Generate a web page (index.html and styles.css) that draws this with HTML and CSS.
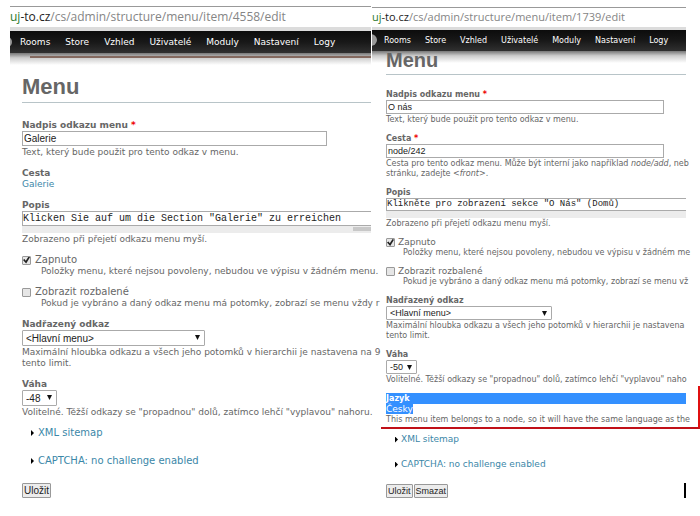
FILE: index.html
```
<!DOCTYPE html>
<html lang="cs">
<head>
<meta charset="utf-8">
<title>Menu</title>
<link rel="stylesheet" href="styles.css">
</head>
<body>
<main class="compare">
  <section class="panel panel-large">
    <div class="screen">
      <div class="address"><span class="host"><span class="secure">uj</span>-to.cz</span>/cs/admin/structure/menu/item/4558/edit</div>
      <nav class="toolbar">
        <a href="#">Rooms</a><a href="#">Store</a><a href="#">Vzhled</a><a href="#">Uživatelé</a><a href="#">Moduly</a><a href="#">Nastavení</a><a href="#">Logy</a>
      </nav>
      <div class="shade"></div>
      <form class="content">
        <h1>Menu</h1>
        <div class="item">
          <label class="title" for="l-title">Nadpis odkazu menu <span class="required">*</span></label>
          <input class="text" id="l-title" type="text" value="Galerie">
          <p class="help">Text, který bude použit pro tento odkaz v menu.</p>
        </div>
        <div class="item">
          <div class="title">Cesta</div>
          <a class="path" href="#">Galerie</a>
        </div>
        <div class="item">
          <label class="title" for="l-desc">Popis</label>
          <textarea id="l-desc" rows="1" wrap="off">Klicken Sie auf um die Section "Galerie" zu erreichen</textarea>
          <div class="track"><div class="thumb"></div></div>
          <p class="help">Zobrazeno při přejetí odkazu menu myší.</p>
        </div>
        <div class="item check">
          <input type="checkbox" id="l-on" checked><label for="l-on">Zapnuto</label>
          <p class="help">Položky menu, které nejsou povoleny, nebudou ve výpisu v žádném menu.</p>
        </div>
        <div class="item check">
          <input type="checkbox" id="l-exp"><label for="l-exp">Zobrazit rozbalené</label>
          <p class="help">Pokud je vybráno a daný odkaz menu má potomky, zobrazí se menu vždy r</p>
        </div>
        <div class="item">
          <label class="title" for="l-parent">Nadřazený odkaz</label>
          <div class="select parent"><select id="l-parent"><option>&lt;Hlavní menu&gt;</option></select></div>
          <p class="help">Maximální hloubka odkazu a všech jeho potomků v hierarchii je nastavena na 9<br>tento limit.</p>
        </div>
        <div class="item">
          <label class="title" for="l-weight">Váha</label>
          <div class="select weight"><select id="l-weight"><option>-48</option></select></div>
          <p class="help">Volitelné. Těžší odkazy se "propadnou" dolů, zatímco lehčí "vyplavou" nahoru.</p>
        </div>
        <div class="groups">
          <a href="#">XML sitemap</a>
          <a href="#">CAPTCHA: no challenge enabled</a>
        </div>
        <div class="actions"><button type="button">Uložit</button></div>
      </form>
    </div>
  </section>
  <section class="panel panel-small">
    <div class="screen">
      <div class="address"><span class="host"><span class="secure">uj</span>-to.cz</span>/cs/admin/structure/menu/item/1739/edit</div>
      <nav class="toolbar">
        <a href="#">Rooms</a><a href="#">Store</a><a href="#">Vzhled</a><a href="#">Uživatelé</a><a href="#">Moduly</a><a href="#">Nastavení</a><a href="#">Logy</a>
      </nav>
      <div class="shade"></div>
      <form class="content">
        <h1>Menu</h1>
        <div class="item">
          <label class="title" for="r-title">Nadpis odkazu menu <span class="required">*</span></label>
          <input class="text" id="r-title" type="text" value="O nás">
          <p class="help">Text, který bude použit pro tento odkaz v menu.</p>
        </div>
        <div class="item">
          <label class="title" for="r-path">Cesta <span class="required">*</span></label>
          <input class="text" id="r-path" type="text" value="node/242">
          <p class="help">Cesta pro tento odkaz menu. Může být interní jako například <em>node/add</em>, neb<br>stránku, zadejte <em>&lt;front&gt;</em>.</p>
        </div>
        <div class="item">
          <label class="title" for="r-desc">Popis</label>
          <textarea id="r-desc" rows="1" wrap="off">Klikněte pro zobrazení sekce "O Nás" (Domů)</textarea>
          <div class="track"></div>
          <p class="help">Zobrazeno při přejetí odkazu menu myší.</p>
        </div>
        <div class="item check">
          <input type="checkbox" id="r-on" checked><label for="r-on">Zapnuto</label>
          <p class="help">Položky menu, které nejsou povoleny, nebudou ve výpisu v žádném me</p>
        </div>
        <div class="item check">
          <input type="checkbox" id="r-exp"><label for="r-exp">Zobrazit rozbalené</label>
          <p class="help">Pokud je vybráno a daný odkaz menu má potomky, zobrazí se menu vž</p>
        </div>
        <div class="item">
          <label class="title" for="r-parent">Nadřazený odkaz</label>
          <div class="select parent"><select id="r-parent"><option>&lt;Hlavní menu&gt;</option></select></div>
          <p class="help">Maximální hloubka odkazu a všech jeho potomků v hierarchii je nastavena<br>tento limit.</p>
        </div>
        <div class="item">
          <label class="title" for="r-weight">Váha</label>
          <div class="select weight"><select id="r-weight"><option>-50</option></select></div>
          <p class="help">Volitelné. Těžší odkazy se "propadnou" dolů, zatímco lehčí "vyplavou" naho</p>
        </div>
        <div class="item">
          <div class="title selected">Jazyk</div>
          <div class="value"><span class="selected">Česky</span></div>
          <p class="help">This menu item belongs to a node, so it will have the same language as the</p>
        </div>
        <div class="groups">
          <a href="#">XML sitemap</a>
          <a href="#">CAPTCHA: no challenge enabled</a>
        </div>
        <div class="actions"><button type="button">Uložit</button><button type="button">Smazat</button></div>
      </form>
    </div>
    <div class="marker"></div>
    <div class="caret"></div>
  </section>
</main>
</body>
</html>
```
FILE: styles.css
```
* { box-sizing: border-box; }

body {
  margin: 0;
  background: #fff;
  color: #666;
  font-family: "DejaVu Sans", sans-serif;
}

h1, p { margin: 0; }
a { color: #3b87a8; text-decoration: none; }

.compare {
  display: grid;
  grid-template-columns: 361fr 314fr;
  column-gap: 1px;
  padding: 0 14px 0 10px;
}

.panel {
  position: relative;
  min-width: 0;
  white-space: nowrap;
}

.panel-large {
  --small: 9px;
  --base: 10px;
  --label: 9px;
  --label-line: 12px;
  --help-line: 11px;
  --control: 15px;
  --select: 16px;
  --gap: 9px;
  --pad: 12px;
  padding-top: 6px;
}

.panel-small {
  --small: 8px;
  --base: 9px;
  --label: 8px;
  --label-line: 11px;
  --help-line: 10px;
  --control: 14px;
  --select: 14px;
  --gap: 8px;
  --pad: 14px;
  padding-top: 7px;
}

/* Long help lines may run a few pixels past the right edge of the panel. */
.panel-small .help { margin-right: -14px; }

.address {
  height: 25px;
  border-top: 1px solid #999;
  border-bottom: 4px solid #dcdcdc;
  color: #858585;
  font: 12px/19px "Open Sans", sans-serif;
}
.panel-small .address { height: 23px; font-size: 11px; line-height: 18px; border-bottom-width: 3px; }
.host { color: #222; }
.secure { color: #2c7a2c; }

.toolbar {
  position: relative;
  display: flex;
  gap: 15px;
  height: 22px;
  padding-left: 10px;
  background: linear-gradient(#0c0c0c, #181818 50%, #303030);
  font-size: var(--small);
  line-height: 22px;
  overflow: hidden;
}
.panel-small .toolbar { gap: 14px; height: 21px; padding-left: 12px; line-height: 21px; }
.toolbar a { color: #fff; }
.toolbar::before {
  content: "";
  position: absolute;
  left: -7px;
  top: 6px;
  width: 9px;
  height: 10px;
  border-radius: 50%;
  background: #999;
}
.panel-small .toolbar::before { left: -8px; top: 4px; width: 13px; height: 12px; }

.shade {
  height: 12px;
  background: linear-gradient(#777, #ccc 40%, #fff);
}
.panel-large .shade::before {
  content: "";
  display: block;
  height: 3px;
  margin-left: 20px;
  border-bottom: 2px solid #84695f;
}
.panel-small .shade { margin-bottom: -13px; }

.content { padding-left: var(--pad); }

h1 {
  position: relative;
  height: 38px;
  margin-bottom: 16px;
  padding-top: 10px;
  border-bottom: 1px solid #b8c4c8;
  font: bold 22px/24px "Liberation Sans", sans-serif;
}
.panel-small h1 {
  height: 25px;
  margin-bottom: 14px;
  padding-top: 0;
  font-size: 20px;
  line-height: 20px;
}

.item { margin-bottom: var(--gap); }

.title {
  display: block;
  font-size: var(--label);
  font-weight: bold;
  line-height: var(--label-line);
}
.required { color: #e00; }

.help {
  margin-top: 1px;
  font-size: var(--small);
  line-height: var(--help-line);
}

.path {
  display: block;
  font-size: var(--small);
  line-height: var(--help-line);
}
.value { font-size: var(--base); line-height: var(--help-line); }
.value span { display: inline-block; }
.selected { background: #3390ff; color: #fff; }

.text {
  display: block;
  width: 305px;
  max-width: 100%;
  height: var(--control);
  padding: 0 1px;
  border: 1px solid #aaa;
  color: #222;
  background: #fff;
  font: var(--base) "Liberation Sans", sans-serif;
}
.panel-small .text { width: 278px; }

textarea {
  display: block;
  width: 100%;
  height: var(--control);
  padding: 0;
  border: 1px solid #aaa;
  border-right: 0;
  color: #222;
  resize: none;
  overflow: hidden;
  font: var(--base)/13px "Liberation Mono", monospace;
}
.panel-small textarea { height: 13px; line-height: 11px; }
.track { display: flex; justify-content: flex-end; height: 7px; background: #ececec; }
.thumb { width: 18px; height: 4px; margin-top: 1px; background: #c8c8c8; }

.check label {
  font-size: var(--base);
  line-height: var(--label-line);
}
.check {
  display: grid;
  grid-template-columns: auto 1fr;
  align-items: center;
  column-gap: 4px;
}
.check .help { grid-column: 1 / -1; margin-top: 0; padding-left: 19px; }
.panel-small .check { column-gap: 3px; }
.panel-small .check .help { padding-left: 17px; }
.check input {
  appearance: none;
  width: 9px;
  height: 9px;
  margin: 0;
  border: 1px solid #999;
  border-radius: 1px;
  background: #e6e6e6;
}
.check input:checked::before {
  content: "";
  display: block;
  width: 7px;
  height: 7px;
  background: #222;
  clip-path: polygon(0 50%, 20% 35%, 40% 60%, 80% 0, 100% 12%, 45% 100%);
}

.select { position: relative; height: var(--select); }
.select select {
  display: block;
  appearance: none;
  width: 100%;
  height: 100%;
  padding: 0 3px;
  border: 1px solid #aaa;
  border-radius: 1px;
  background: #fff;
  color: #222;
  font: var(--base) "Liberation Sans", sans-serif;
}
.select::after {
  content: "";
  position: absolute;
  right: 5px;
  top: 5px;
  width: 5px;
  height: 5px;
  background: #111;
  clip-path: polygon(0 0, 100% 0, 50% 100%);
}
.parent { width: 183px; }
.weight { width: 35px; }
.panel-small .parent { width: 166px; }
.panel-small .weight { width: 31px; }

.groups {
  display: grid;
  justify-items: start;
  row-gap: 16px;
  padding-left: 9px;
  font-size: var(--base);
  line-height: var(--label-line);
}
.panel-small .groups { row-gap: 14px; padding-top: 1px; }
.groups a { display: flex; align-items: center; gap: 4px; }
.groups a::before {
  content: "";
  width: 3px;
  height: 6px;
  background: #000;
  clip-path: polygon(0 0, 100% 50%, 0 100%);
}
.panel-small .groups a { gap: 3px; }

.actions { display: flex; margin-top: 16px; }
.panel-small .actions { margin-top: 14px; gap: 1px; }
button {
  height: var(--control);
  padding: 0 1px;
  border: 1px solid #999;
  border-radius: 1px;
  background: #ececec;
  color: #222;
  font: var(--base) "Liberation Sans", sans-serif;
}

.marker {
  position: absolute;
  left: 9px;
  right: -14px;
  top: 386px;
  height: 43px;
  border-right: 2px solid #e01010;
  border-bottom: 2px solid #c01018;
  pointer-events: none;
}
.caret {
  position: absolute;
  right: 0;
  top: 483px;
  width: 2px;
  height: 17px;
  background: #000;
}
```
